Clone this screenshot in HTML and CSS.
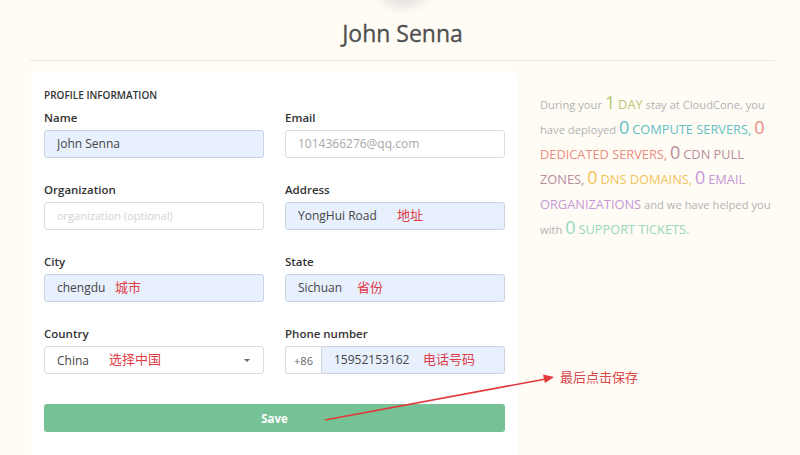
FILE: index.html
```html
<!DOCTYPE html>
<html lang="en">
<head>
    <meta charset="UTF-8">
    <meta name="viewport" content="width=device-width, initial-scale=1.0">
    <title>Profile - John Senna</title>
    <link rel="stylesheet" href="styles.css">
</head>
<body>
    <div class="page">
        <header class="profile-head">
            <div class="avatar"></div>
            <h1>John Senna</h1>
        </header>

        <div class="content">
            <form class="card" onsubmit="return false">
                <h2>Profile Information</h2>
                <div class="fields">
                    <div class="field">
                        <label>Name</label>
                        <div class="control">
                            <input class="filled" type="text" value="John Senna" readonly>
                        </div>
                    </div>
                    <div class="field">
                        <label>Email</label>
                        <div class="control">
                            <input type="text" placeholder="1014366276@qq.com" readonly>
                        </div>
                    </div>

                    <div class="field">
                        <label>Organization</label>
                        <div class="control">
                            <input class="optional" type="text" placeholder="organization (optional)" readonly>
                        </div>
                    </div>
                    <div class="field">
                        <label>Address</label>
                        <div class="control">
                            <input class="filled" type="text" value="YongHui Road" readonly>
                            <span class="note note-address">地址</span>
                        </div>
                    </div>

                    <div class="field">
                        <label>City</label>
                        <div class="control">
                            <input class="filled" type="text" value="chengdu" readonly>
                            <span class="note note-city">城市</span>
                        </div>
                    </div>
                    <div class="field">
                        <label>State</label>
                        <div class="control">
                            <input class="filled" type="text" value="Sichuan" readonly>
                            <span class="note note-state">省份</span>
                        </div>
                    </div>

                    <div class="field">
                        <label>Country</label>
                        <div class="control">
                            <div class="select">
                                <span>China</span>
                                <span class="caret"></span>
                            </div>
                            <span class="note note-country">选择中国</span>
                        </div>
                    </div>
                    <div class="field">
                        <label>Phone number</label>
                        <div class="control phone">
                            <span class="prefix">+86</span>
                            <input class="filled" type="text" value="15952153162" readonly>
                            <span class="note note-phone">电话号码</span>
                        </div>
                    </div>
                </div>
                <button class="save" type="submit">Save</button>
            </form>

            <aside class="stats">
                <p>
                    During your <b class="num lime">1</b> <span class="tag lime">DAY</span> stay at CloudCone, you
                    have deployed <b class="num teal">0</b> <span class="tag teal">COMPUTE SERVERS,</span>
                    <b class="num coral">0</b> <span class="tag coral">DEDICATED SERVERS,</span>
                    <b class="num mauve">0</b> <span class="tag mauve">CDN PULL ZONES,</span>
                    <b class="num amber">0</b> <span class="tag amber">DNS DOMAINS,</span>
                    <b class="num lilac">0</b> <span class="tag lilac">EMAIL ORGANIZATIONS</span>
                    and we have helped you with <b class="num mint">0</b> <span class="tag mint">SUPPORT TICKETS.</span>
                </p>
            </aside>
        </div>

        <!-- hand-drawn hint pointing at the save button -->
        <svg class="hint-arrow" width="800" height="455" viewBox="0 0 800 455">
            <line x1="325" y1="420" x2="546" y2="379" stroke="#e2383c" stroke-width="1.6"/>
            <polygon points="554,377 543,374.5 545,383" fill="#e2383c"/>
        </svg>
        <div class="hint-text">最后点击保存</div>
    </div>
</body>
</html>
```

FILE: styles.css
```css
* {
    box-sizing: border-box;
}

body {
    margin: 0;
    background: #fffcf5;
    font-family: "Open Sans", "Noto Sans CJK SC", sans-serif;
    color: #333;
    overflow: hidden;
}

/* own block context so the avatar's pull-up margin stays inside */
.page {
    position: relative;
    height: 455px;
    overflow: hidden;
}

.profile-head {
    margin: 0 25px 0 30px;
    padding-bottom: 12px;
    border-bottom: 1px solid #ece9e2;
    text-align: center;
}

.avatar {
    width: 60px;
    height: 60px;
    margin: -52px auto 0;
    border-radius: 50%;
    background: #e6e4df;
    filter: blur(5px);
}

.profile-head h1 {
    margin: 10px 0 0;
    font-size: 23px;
    line-height: 30px;
    font-weight: 400;
    color: #4f4f4f;
    -webkit-text-stroke: 0.3px #4f4f4f;
}

.content {
    display: flex;
    align-items: flex-start;
    gap: 22px;
    padding-left: 31px;
    margin-top: 10px;
}

.card {
    width: 487px;
    height: 400px;
    padding: 17px 13px 30px;
    background: #fff;
    border-radius: 4px;
}

.card h2 {
    margin: 0 0 8px;
    font-size: 10px;
    line-height: 14px;
    font-weight: 600;
    text-transform: uppercase;
    color: #333;
}

.fields {
    display: grid;
    grid-template-columns: 220px 220px;
    column-gap: 21px;
}

.field {
    margin-bottom: 24px;
}

.field label {
    display: block;
    margin-bottom: 4px;
    font-size: 11.5px;
    line-height: 16px;
    font-weight: 600;
    color: #333;
}

.control {
    position: relative;
    display: flex;
    height: 28px;
}

.control input,
.select {
    width: 100%;
    height: 28px;
    padding: 0 12px 2px;
    border: 1px solid #dcdcdc;
    border-radius: 3px;
    background: #fff;
    font-family: inherit;
    font-size: 12px;
    color: #444;
    outline: none;
}

.control input::placeholder {
    color: #a9a9a9;
}

.control input.optional::placeholder {
    color: #d2d2d2;
    font-size: 11px;
}

.control input.filled {
    background: #e8f0fe;
    border-color: #ccd4e2;
}

.select {
    display: flex;
    align-items: center;
    justify-content: space-between;
    padding-bottom: 0;
}

.caret {
    width: 0;
    height: 0;
    margin-right: 1px;
    border-left: 3px solid transparent;
    border-right: 3px solid transparent;
    border-top: 3px solid #666;
}

.phone .prefix {
    flex: 0 0 36px;
    display: flex;
    align-items: center;
    justify-content: center;
    border: 1px solid #dcdcdc;
    border-right: none;
    border-radius: 3px 0 0 3px;
    font-size: 11px;
    color: #666;
}

.phone input {
    border-radius: 0 3px 3px 0;
}

.note {
    position: absolute;
    top: 5px;
    font-size: 13px;
    line-height: 16px;
    color: #e03b45;
    pointer-events: none;
}

.note-address { left: 112px; }
.note-city { left: 71px; }
.note-state { left: 72px; }
.note-country { left: 65px; }
.note-phone { left: 138px; }

.save {
    display: block;
    width: 100%;
    height: 28px;
    margin-top: 6px;
    border: none;
    border-radius: 3px;
    background: #77c196;
    color: #fff;
    font-family: inherit;
    font-size: 11.5px;
    font-weight: 700;
    cursor: pointer;
}

.stats {
    width: 236px;
    margin-top: 21px;
}

.stats p {
    margin: 0;
    font-size: 11.2px;
    line-height: 25px;
    color: #b3b3b3;
}

/* keep the big counters from stretching the lines */
.stats .num,
.stats .tag {
    line-height: 1;
}

.stats .num {
    font-size: 18px;
    font-weight: 400;
}

.stats .tag {
    font-size: 12.8px;
}

.lime { color: #b9c777; }
.teal { color: #63c0c6; }
.coral { color: #ea8d82; }
.mauve { color: #b88d9d; }
.amber { color: #f2c25a; }
.lilac { color: #c597d6; }
.mint { color: #97d8bb; }

.hint-arrow {
    position: absolute;
    left: 0;
    top: 0;
    pointer-events: none;
}

.hint-text {
    position: absolute;
    left: 560px;
    top: 368px;
    font-size: 13px;
    line-height: 18px;
    color: #d6474b;
}
```
